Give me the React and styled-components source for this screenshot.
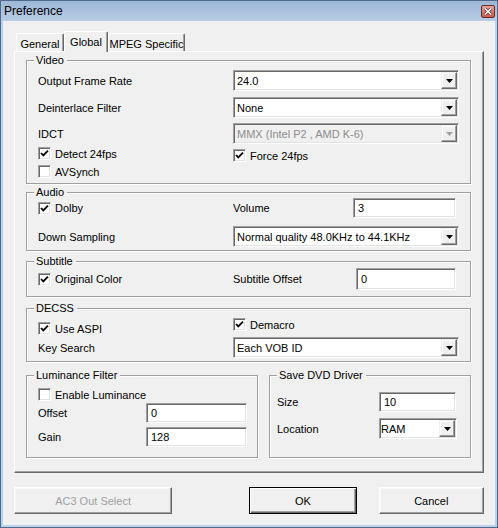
import React from 'react';
import styled, { createGlobalStyle } from 'styled-components';

const GlobalStyle = createGlobalStyle`
  html, body {
    margin: 0;
    padding: 0;
    background: #ffffff;
  }
  body {
    font-family: "Liberation Sans", Arial, sans-serif;
    font-size: 11px;
    color: #000;
  }
  * {
    box-sizing: border-box;
  }
`;

const Window = styled.div`
  width: 498px;
  height: 528px;
  display: flex;
  flex-direction: column;
  border: 1px solid #4d6a8c;
  padding: 0 2px 2px;
  background: linear-gradient(to bottom, #9db7d7 0px, #b8cde6 20px, #bcd2ea 21px);
`;

const TitleBar = styled.div`
  height: 20px;
  flex: none;
  display: flex;
  align-items: center;
  justify-content: space-between;
  padding-left: 1px;
`;

const Title = styled.span`
  font-size: 12px;
  color: #000;
`;

const CloseButton = styled.div`
  width: 14px;
  height: 13px;
  border: 1px solid #6b2a26;
  border-radius: 2px;
  background: linear-gradient(to bottom, #e6a59c, #c75a4e);
  display: flex;
  align-items: center;
  justify-content: center;
  margin-top: 1px;
`;

const Client = styled.div`
  flex: 1;
  background: #f0f0f0;
  padding: 10px 11px 0;
  display: flex;
  flex-direction: column;
`;

const TabStrip = styled.div`
  height: 21px;
  display: flex;
  align-items: flex-end;
  padding-left: 2px;
  position: relative;
  z-index: 1;
`;

const Tab = styled.div`
  width: ${(p) => p.$w}px;
  height: ${(p) => (p.$active ? 21 : 18)}px;
  margin-bottom: ${(p) => (p.$active ? 0 : 1)}px;
  padding-top: ${(p) => (p.$active ? 0 : 2)}px;
  background: #f0f0f0;
  border: 1px solid;
  border-color: #fff #696969 transparent #fff;
  border-bottom: none;
  border-radius: 2px 2px 0 0;
  box-shadow: inset -1px 0 0 #a0a0a0;
  display: flex;
  align-items: center;
  justify-content: center;
  white-space: nowrap;
`;

const Panel = styled.div`
  margin-top: -1px;
  height: 422px;
  border: 1px solid;
  border-color: #fff #696969 #696969 #fff;
  box-shadow: inset -1px -1px 0 #a0a0a0;
  padding: 8px 12px 0 11px;
  display: flex;
  flex-direction: column;
`;

const Group = styled.div`
  position: relative;
  flex: none;
  width: ${(p) => (p.$w ? `${p.$w}px` : 'auto')};
  height: ${(p) => p.$h}px;
  margin-top: ${(p) => p.$mt || 0}px;
  padding: ${(p) => p.$pad};
  border: 1px solid #a0a0a0;
  box-shadow: 1px 1px 0 #fff, inset 1px 1px 0 #fff;
`;

const Legend = styled.span`
  position: absolute;
  top: -7px;
  left: 7px;
  line-height: 13px;
  padding: 0 3px 0 2px;
  background: #f0f0f0;
  white-space: nowrap;
`;

const Row = styled.div`
  display: flex;
  align-items: ${(p) => p.$align || 'center'};
  height: ${(p) => p.$h}px;
  margin-top: ${(p) => p.$mt || 0}px;
`;

const GroupRow = styled.div`
  display: flex;
  gap: 11px;
  margin-top: 13px;
  height: 83px;
`;

const Label = styled.span`
  flex: none;
  width: ${(p) => (p.$w ? `${p.$w}px` : 'auto')};
  white-space: nowrap;
`;

const CheckLabel = styled.label`
  flex: none;
  display: inline-flex;
  align-items: center;
  gap: 4px;
  width: ${(p) => (p.$w ? `${p.$w}px` : 'auto')};
  margin-top: ${(p) => p.$mt || 0}px;
  white-space: nowrap;
`;

const Box = styled.span`
  width: 13px;
  height: 13px;
  flex: none;
  background: #fff;
  border: 1px solid;
  border-color: #a0a0a0 #fff #fff #a0a0a0;
  box-shadow: inset 1px 1px 0 #696969, inset -1px -1px 0 #e3e3e3;
  display: flex;
  align-items: center;
  justify-content: center;
`;

const Field = styled.div`
  flex: none;
  width: ${(p) => p.$w}px;
  height: ${(p) => p.$h || 21}px;
  margin-right: ${(p) => p.$mr || 0}px;
  background: ${(p) => (p.$disabled ? '#f0f0f0' : '#fff')};
  color: ${(p) => (p.$disabled ? '#8d8d8d' : '#000')};
  border: 1px solid;
  border-color: #a0a0a0 #fff #fff #a0a0a0;
  box-shadow: inset 1px 1px 0 #696969, inset -1px -1px 0 #e3e3e3;
  padding: 1px;
  display: flex;
  align-items: center;
  white-space: nowrap;
  overflow: hidden;
`;

const FieldText = styled.span`
  flex: 1;
  padding-left: ${(p) => (p.$pl === undefined ? 2 : p.$pl)}px;
  overflow: hidden;
`;

const ArrowButton = styled.span`
  flex: none;
  width: 16px;
  height: 100%;
  background: #f0f0f0;
  border: 1px solid;
  border-color: #f0f0f0 #696969 #696969 #f0f0f0;
  box-shadow: inset -1px -1px 0 #a0a0a0, inset 1px 1px 0 #fff;
  display: flex;
  align-items: center;
  justify-content: center;
`;

const ButtonRow = styled.div`
  display: flex;
  margin-top: 14px;
  height: 27px;
`;

const PushButton = styled.div`
  width: ${(p) => p.$w}px;
  margin-left: ${(p) => p.$ml || 0}px;
  height: 27px;
  background: #f0f0f0;
  color: ${(p) => (p.$disabled ? '#a0a0a0' : '#000')};
  border: 1px solid;
  border-color: ${(p) => (p.$default ? '#000' : '#fff #696969 #696969 #fff')};
  box-shadow: ${(p) =>
    p.$default
      ? 'inset 1px 1px 0 #fff, inset -1px -1px 0 #696969, inset -2px -2px 0 #a0a0a0'
      : 'inset -1px -1px 0 #a0a0a0, inset 1px 1px 0 #f8f8f8'};
  display: flex;
  align-items: center;
  justify-content: center;
`;

function Check({ checked, children, w, mt }) {
  return (
    <CheckLabel $w={w} $mt={mt}>
      <Box>
        {checked && (
          <svg width="9" height="9" viewBox="0 0 9 9">
            <path d="M1 4 L3.3 6.4 L8 1.6" fill="none" stroke="#000" strokeWidth="1.8" />
          </svg>
        )}
      </Box>
      {children}
    </CheckLabel>
  );
}

function Combo({ value, w, disabled, pl }) {
  return (
    <Field $w={w} $disabled={disabled}>
      <FieldText $pl={pl}>{value}</FieldText>
      <ArrowButton>
        <svg width="7" height="4" viewBox="0 0 7 4">
          <polygon points="0,0 7,0 3.5,4" fill={disabled ? '#a0a0a0' : '#000'} />
        </svg>
      </ArrowButton>
    </Field>
  );
}

function TextBox({ value, w, h, mr }) {
  return (
    <Field $w={w} $h={h || 20} $mr={mr}>
      <FieldText $pl={3}>{value}</FieldText>
    </Field>
  );
}

export default function App() {
  return (
    <>
      <GlobalStyle />
      <Window>
        <TitleBar>
          <Title>Preference</Title>
          <CloseButton>
            <svg width="8" height="7" viewBox="0 0 8 7">
              <path d="M1 0.5 L7 6.5 M7 0.5 L1 6.5" stroke="#5a2522" strokeWidth="3" />
              <path d="M1 0.5 L7 6.5 M7 0.5 L1 6.5" stroke="#fff" strokeWidth="1.6" />
            </svg>
          </CloseButton>
        </TitleBar>
        <Client>
          <TabStrip>
            <Tab $w={48}>General</Tab>
            <Tab $w={44} $active>Global</Tab>
            <Tab $w={77}>MPEG Specific</Tab>
          </TabStrip>
          <Panel>
            <Group $h={124} $pad="9px 11px 0">
              <Legend>Video</Legend>
              <Row $h={21}>
                <Label $w={195}>Output Frame Rate</Label>
                <Combo w={226} value="24.0" />
              </Row>
              <Row $h={21} $mt={6}>
                <Label $w={195}>Deinterlace Filter</Label>
                <Combo w={226} value="None" />
              </Row>
              <Row $h={21} $mt={5}>
                <Label $w={195}>IDCT</Label>
                <Combo w={226} value="MMX (Intel P2 , AMD K-6)" disabled />
              </Row>
              <Row $h={15} $mt={3} $align="flex-start">
                <Check w={195} checked>Detect 24fps</Check>
                <Check mt={2} checked>Force 24fps</Check>
              </Row>
              <Row $h={13} $mt={3}>
                <Check>AVSynch</Check>
              </Row>
            </Group>

            <Group $h={59} $mt={8} $pad="5px 11px 0">
              <Legend>Audio</Legend>
              <Row $h={20}>
                <Check w={195} checked>Dolby</Check>
                <Label $w={120}>Volume</Label>
                <TextBox w={103} value="3" />
              </Row>
              <Row $h={21} $mt={8}>
                <Label $w={195}>Down Sampling</Label>
                <Combo w={226} value="Normal quality 48.0KHz to 44.1KHz" />
              </Row>
            </Group>

            <Group $h={36} $mt={10} $pad="6px 11px 0">
              <Legend>Subtitle</Legend>
              <Row $h={22}>
                <Check w={195} checked>Original Color</Check>
                <Label $w={123}>Subtitle Offset</Label>
                <TextBox w={100} h={22} value="0" />
              </Row>
            </Group>

            <Group $h={54} $mt={11} $pad="9px 11px 0">
              <Legend>DECSS</Legend>
              <Row $h={17} $align="flex-start">
                <Check w={195} mt={4} checked>Use ASPI</Check>
                <Check checked>Demacro</Check>
              </Row>
              <Row $h={21} $mt={2}>
                <Label $w={195}>Key Search</Label>
                <Combo w={226} value="Each VOB ID" />
              </Row>
            </Group>

            <GroupRow>
              <Group $w={232} $h={83} $pad="12px 10px 0 11px">
                <Legend>Luminance Filter</Legend>
                <Row $h={13}>
                  <Check>Enable Luminance</Check>
                </Row>
                <Row $h={20} $mt={2}>
                  <Label $w={108}>Offset</Label>
                  <TextBox w={101} value="0" />
                </Row>
                <Row $h={20} $mt={4}>
                  <Label $w={108}>Gain</Label>
                  <TextBox w={101} value="128" />
                </Row>
              </Group>
              <Group $w={202} $h={83} $pad="16px 7px 0 7px">
                <Legend>Save DVD Driver</Legend>
                <Row $h={20}>
                  <Label $w={102}>Size</Label>
                  <TextBox w={77} value="10" />
                </Row>
                <Row $h={21} $mt={6}>
                  <Label $w={102}>Location</Label>
                  <Combo w={78} value="RAM" pl={0} />
                </Row>
              </Group>
            </GroupRow>
          </Panel>
          <ButtonRow>
            <PushButton $w={159} $disabled>AC3 Out Select</PushButton>
            <PushButton $w={108} $ml={77} $default>OK</PushButton>
            <PushButton $w={106} $ml={22}>Cancel</PushButton>
          </ButtonRow>
        </Client>
      </Window>
    </>
  );
}
